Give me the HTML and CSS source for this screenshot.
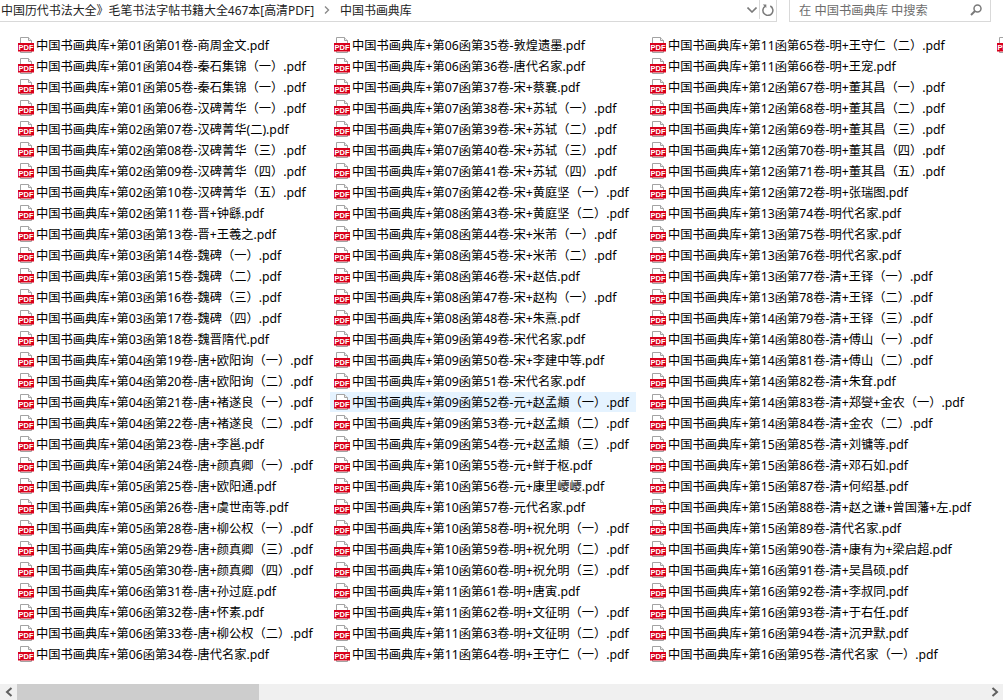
FILE: index.html
```html
<!DOCTYPE html>
<html lang="zh-CN">
<head>
    <meta charset="UTF-8">
    <title>中国书画典库</title>
    <link rel="stylesheet" href="styles.css">
</head>
<body>
    <svg class="defs">
        <symbol id="pdf" viewBox="0 0 16 16">
            <path d="M2.5 .5H10.5L13.5 3.5V15.5H2.5Z" fill="#fff" stroke="#a3a3a3"/>
            <path d="M10.5 .5V3.5H13.5" fill="#eee" stroke="#a3a3a3"/>
            <rect x="0" y="6" width="16" height="8.5" fill="#d9001b"/>
            <text x="8" y="12.8" text-anchor="middle" font-family="Liberation Sans, sans-serif" font-size="7.5" font-weight="bold" fill="#fff">PDF</text>
        </symbol>
    </svg>

    <div class="toolbar">
        <div class="address">
            <span class="crumb">中国历代书法大全》毛笔书法字帖书籍大全467本[高清PDF]</span>
            <svg class="crumb-sep" width="6" height="8" viewBox="0 0 6 8"><path d="M1 .5L4.5 4L1 7.500" fill="none" stroke="#8a8a8a" stroke-width="1.400"/></svg>
            <span class="crumb">中国书画典库</span>
            <div class="address-btns">
                <svg class="chevron" width="10" height="6" viewBox="0 0 10 6"><path d="M.5 .5L5 5L9.500 .5" fill="none" stroke="#7a7a7a" stroke-width="1.600"/></svg>
                <svg class="refresh" width="12" height="13" viewBox="0 0 12 13"><path d="M8.300 3A5 5 0 1 1 3 3.300" fill="none" stroke="#7a7a7a" stroke-width="1.500"/><path d="M2.300 .5H5.800V4Z" fill="#7a7a7a" transform="translate(-1.500 1)"/></svg>
            </div>
        </div>
        <div class="search">
            <span class="search-text">在 中国书画典库 中搜索</span>
            <svg width="12" height="12" viewBox="0 0 12 12"><circle cx="7.500" cy="4.500" r="3.500" fill="none" stroke="#7a7a7a" stroke-width="1.500"/><path d="M5 7L1 11" stroke="#7a7a7a" stroke-width="2"/></svg>
        </div>
    </div>

    <ul class="files">
        <li><svg class="pdf"><use href="#pdf"/></svg>中国书画典库+第01函第01卷-商周金文.pdf</li>
        <li><svg class="pdf"><use href="#pdf"/></svg>中国书画典库+第01函第04卷-秦石集锦（一）.pdf</li>
        <li><svg class="pdf"><use href="#pdf"/></svg>中国书画典库+第01函第05卷-秦石集锦（一）.pdf</li>
        <li><svg class="pdf"><use href="#pdf"/></svg>中国书画典库+第01函第06卷-汉碑菁华（一）.pdf</li>
        <li><svg class="pdf"><use href="#pdf"/></svg>中国书画典库+第02函第07卷-汉碑菁华(二).pdf</li>
        <li><svg class="pdf"><use href="#pdf"/></svg>中国书画典库+第02函第08卷-汉碑菁华（三）.pdf</li>
        <li><svg class="pdf"><use href="#pdf"/></svg>中国书画典库+第02函第09卷-汉碑菁华（四）.pdf</li>
        <li><svg class="pdf"><use href="#pdf"/></svg>中国书画典库+第02函第10卷-汉碑菁华（五）.pdf</li>
        <li><svg class="pdf"><use href="#pdf"/></svg>中国书画典库+第02函第11卷-晋+钟繇.pdf</li>
        <li><svg class="pdf"><use href="#pdf"/></svg>中国书画典库+第03函第13卷-晋+王羲之.pdf</li>
        <li><svg class="pdf"><use href="#pdf"/></svg>中国书画典库+第03函第14卷-魏碑（一）.pdf</li>
        <li><svg class="pdf"><use href="#pdf"/></svg>中国书画典库+第03函第15卷-魏碑（二）.pdf</li>
        <li><svg class="pdf"><use href="#pdf"/></svg>中国书画典库+第03函第16卷-魏碑（三）.pdf</li>
        <li><svg class="pdf"><use href="#pdf"/></svg>中国书画典库+第03函第17卷-魏碑（四）.pdf</li>
        <li><svg class="pdf"><use href="#pdf"/></svg>中国书画典库+第03函第18卷-魏晋隋代.pdf</li>
        <li><svg class="pdf"><use href="#pdf"/></svg>中国书画典库+第04函第19卷-唐+欧阳询（一）.pdf</li>
        <li><svg class="pdf"><use href="#pdf"/></svg>中国书画典库+第04函第20卷-唐+欧阳询（二）.pdf</li>
        <li><svg class="pdf"><use href="#pdf"/></svg>中国书画典库+第04函第21卷-唐+褚遂良（一）.pdf</li>
        <li><svg class="pdf"><use href="#pdf"/></svg>中国书画典库+第04函第22卷-唐+褚遂良（二）.pdf</li>
        <li><svg class="pdf"><use href="#pdf"/></svg>中国书画典库+第04函第23卷-唐+李邕.pdf</li>
        <li><svg class="pdf"><use href="#pdf"/></svg>中国书画典库+第04函第24卷-唐+颜真卿（一）.pdf</li>
        <li><svg class="pdf"><use href="#pdf"/></svg>中国书画典库+第05函第25卷-唐+欧阳通.pdf</li>
        <li><svg class="pdf"><use href="#pdf"/></svg>中国书画典库+第05函第26卷-唐+虞世南等.pdf</li>
        <li><svg class="pdf"><use href="#pdf"/></svg>中国书画典库+第05函第28卷-唐+柳公权（一）.pdf</li>
        <li><svg class="pdf"><use href="#pdf"/></svg>中国书画典库+第05函第29卷-唐+颜真卿（三）.pdf</li>
        <li><svg class="pdf"><use href="#pdf"/></svg>中国书画典库+第05函第30卷-唐+颜真卿（四）.pdf</li>
        <li><svg class="pdf"><use href="#pdf"/></svg>中国书画典库+第06函第31卷-唐+孙过庭.pdf</li>
        <li><svg class="pdf"><use href="#pdf"/></svg>中国书画典库+第06函第32卷-唐+怀素.pdf</li>
        <li><svg class="pdf"><use href="#pdf"/></svg>中国书画典库+第06函第33卷-唐+柳公权（二）.pdf</li>
        <li><svg class="pdf"><use href="#pdf"/></svg>中国书画典库+第06函第34卷-唐代名家.pdf</li>

        <li><svg class="pdf"><use href="#pdf"/></svg>中国书画典库+第06函第35卷-敦煌遗墨.pdf</li>
        <li><svg class="pdf"><use href="#pdf"/></svg>中国书画典库+第06函第36卷-唐代名家.pdf</li>
        <li><svg class="pdf"><use href="#pdf"/></svg>中国书画典库+第07函第37卷-宋+蔡襄.pdf</li>
        <li><svg class="pdf"><use href="#pdf"/></svg>中国书画典库+第07函第38卷-宋+苏轼（一）.pdf</li>
        <li><svg class="pdf"><use href="#pdf"/></svg>中国书画典库+第07函第39卷-宋+苏轼（二）.pdf</li>
        <li><svg class="pdf"><use href="#pdf"/></svg>中国书画典库+第07函第40卷-宋+苏轼（三）.pdf</li>
        <li><svg class="pdf"><use href="#pdf"/></svg>中国书画典库+第07函第41卷-宋+苏轼（四）.pdf</li>
        <li><svg class="pdf"><use href="#pdf"/></svg>中国书画典库+第07函第42卷-宋+黄庭坚（一）.pdf</li>
        <li><svg class="pdf"><use href="#pdf"/></svg>中国书画典库+第08函第43卷-宋+黄庭坚（二）.pdf</li>
        <li><svg class="pdf"><use href="#pdf"/></svg>中国书画典库+第08函第44卷-宋+米芾（一）.pdf</li>
        <li><svg class="pdf"><use href="#pdf"/></svg>中国书画典库+第08函第45卷-宋+米芾（二）.pdf</li>
        <li><svg class="pdf"><use href="#pdf"/></svg>中国书画典库+第08函第46卷-宋+赵佶.pdf</li>
        <li><svg class="pdf"><use href="#pdf"/></svg>中国书画典库+第08函第47卷-宋+赵构（一）.pdf</li>
        <li><svg class="pdf"><use href="#pdf"/></svg>中国书画典库+第08函第48卷-宋+朱熹.pdf</li>
        <li><svg class="pdf"><use href="#pdf"/></svg>中国书画典库+第09函第49卷-宋代名家.pdf</li>
        <li><svg class="pdf"><use href="#pdf"/></svg>中国书画典库+第09函第50卷-宋+李建中等.pdf</li>
        <li><svg class="pdf"><use href="#pdf"/></svg>中国书画典库+第09函第51卷-宋代名家.pdf</li>
        <li class="hover"><svg class="pdf"><use href="#pdf"/></svg>中国书画典库+第09函第52卷-元+赵孟頫（一）.pdf</li>
        <li><svg class="pdf"><use href="#pdf"/></svg>中国书画典库+第09函第53卷-元+赵孟頫（二）.pdf</li>
        <li><svg class="pdf"><use href="#pdf"/></svg>中国书画典库+第09函第54卷-元+赵孟頫（三）.pdf</li>
        <li><svg class="pdf"><use href="#pdf"/></svg>中国书画典库+第10函第55卷-元+鲜于枢.pdf</li>
        <li><svg class="pdf"><use href="#pdf"/></svg>中国书画典库+第10函第56卷-元+康里巎巎.pdf</li>
        <li><svg class="pdf"><use href="#pdf"/></svg>中国书画典库+第10函第57卷-元代名家.pdf</li>
        <li><svg class="pdf"><use href="#pdf"/></svg>中国书画典库+第10函第58卷-明+祝允明（一）.pdf</li>
        <li><svg class="pdf"><use href="#pdf"/></svg>中国书画典库+第10函第59卷-明+祝允明（二）.pdf</li>
        <li><svg class="pdf"><use href="#pdf"/></svg>中国书画典库+第10函第60卷-明+祝允明（三）.pdf</li>
        <li><svg class="pdf"><use href="#pdf"/></svg>中国书画典库+第11函第61卷-明+唐寅.pdf</li>
        <li><svg class="pdf"><use href="#pdf"/></svg>中国书画典库+第11函第62卷-明+文征明（一）.pdf</li>
        <li><svg class="pdf"><use href="#pdf"/></svg>中国书画典库+第11函第63卷-明+文征明（二）.pdf</li>
        <li><svg class="pdf"><use href="#pdf"/></svg>中国书画典库+第11函第64卷-明+王守仁（一）.pdf</li>

        <li><svg class="pdf"><use href="#pdf"/></svg>中国书画典库+第11函第65卷-明+王守仁（二）.pdf</li>
        <li><svg class="pdf"><use href="#pdf"/></svg>中国书画典库+第11函第66卷-明+王宠.pdf</li>
        <li><svg class="pdf"><use href="#pdf"/></svg>中国书画典库+第12函第67卷-明+董其昌（一）.pdf</li>
        <li><svg class="pdf"><use href="#pdf"/></svg>中国书画典库+第12函第68卷-明+董其昌（二）.pdf</li>
        <li><svg class="pdf"><use href="#pdf"/></svg>中国书画典库+第12函第69卷-明+董其昌（三）.pdf</li>
        <li><svg class="pdf"><use href="#pdf"/></svg>中国书画典库+第12函第70卷-明+董其昌（四）.pdf</li>
        <li><svg class="pdf"><use href="#pdf"/></svg>中国书画典库+第12函第71卷-明+董其昌（五）.pdf</li>
        <li><svg class="pdf"><use href="#pdf"/></svg>中国书画典库+第12函第72卷-明+张瑞图.pdf</li>
        <li><svg class="pdf"><use href="#pdf"/></svg>中国书画典库+第13函第74卷-明代名家.pdf</li>
        <li><svg class="pdf"><use href="#pdf"/></svg>中国书画典库+第13函第75卷-明代名家.pdf</li>
        <li><svg class="pdf"><use href="#pdf"/></svg>中国书画典库+第13函第76卷-明代名家.pdf</li>
        <li><svg class="pdf"><use href="#pdf"/></svg>中国书画典库+第13函第77卷-清+王铎（一）.pdf</li>
        <li><svg class="pdf"><use href="#pdf"/></svg>中国书画典库+第13函第78卷-清+王铎（二）.pdf</li>
        <li><svg class="pdf"><use href="#pdf"/></svg>中国书画典库+第14函第79卷-清+王铎（三）.pdf</li>
        <li><svg class="pdf"><use href="#pdf"/></svg>中国书画典库+第14函第80卷-清+傅山（一）.pdf</li>
        <li><svg class="pdf"><use href="#pdf"/></svg>中国书画典库+第14函第81卷-清+傅山（二）.pdf</li>
        <li><svg class="pdf"><use href="#pdf"/></svg>中国书画典库+第14函第82卷-清+朱耷.pdf</li>
        <li><svg class="pdf"><use href="#pdf"/></svg>中国书画典库+第14函第83卷-清+郑燮+金农（一）.pdf</li>
        <li><svg class="pdf"><use href="#pdf"/></svg>中国书画典库+第14函第84卷-清+金农（二）.pdf</li>
        <li><svg class="pdf"><use href="#pdf"/></svg>中国书画典库+第15函第85卷-清+刘镛等.pdf</li>
        <li><svg class="pdf"><use href="#pdf"/></svg>中国书画典库+第15函第86卷-清+邓石如.pdf</li>
        <li><svg class="pdf"><use href="#pdf"/></svg>中国书画典库+第15函第87卷-清+何绍基.pdf</li>
        <li><svg class="pdf"><use href="#pdf"/></svg>中国书画典库+第15函第88卷-清+赵之谦+曾国藩+左.pdf</li>
        <li><svg class="pdf"><use href="#pdf"/></svg>中国书画典库+第15函第89卷-清代名家.pdf</li>
        <li><svg class="pdf"><use href="#pdf"/></svg>中国书画典库+第15函第90卷-清+康有为+梁启超.pdf</li>
        <li><svg class="pdf"><use href="#pdf"/></svg>中国书画典库+第16函第91卷-清+吴昌硕.pdf</li>
        <li><svg class="pdf"><use href="#pdf"/></svg>中国书画典库+第16函第92卷-清+李叔同.pdf</li>
        <li><svg class="pdf"><use href="#pdf"/></svg>中国书画典库+第16函第93卷-清+于右任.pdf</li>
        <li><svg class="pdf"><use href="#pdf"/></svg>中国书画典库+第16函第94卷-清+沉尹默.pdf</li>
        <li><svg class="pdf"><use href="#pdf"/></svg>中国书画典库+第16函第95卷-清代名家（一）.pdf</li>

        <li><svg class="pdf"><use href="#pdf"/></svg></li>
    </ul>

    <div class="scrollbar">
        <div class="arrow"><svg width="8" height="10" viewBox="0 0 8 10"><path d="M6.500 1L2 5L6.500 9" fill="none" stroke="#606060" stroke-width="2"/></svg></div>
        <div class="thumb"></div>
        <div class="arrow"><svg width="8" height="10" viewBox="0 0 8 10"><path d="M1.500 1L6 5L1.500 9" fill="none" stroke="#606060" stroke-width="2"/></svg></div>
    </div>
</body>
</html>
```

FILE: styles.css
```css
html, body {
    height: 100%;
}
body {
    margin: 0;
    display: flex;
    flex-direction: column;
    overflow: hidden;
    background-color: white;
    color: #000;
    font-family: "Noto Sans", "Noto Sans CJK SC", sans-serif;
    font-size: 12.25px;
}
.defs {
    display: none;
}
.toolbar {
    display: flex;
    flex: none;
    height: 22px;
}
.address {
    display: flex;
    align-items: center;
    width: 777px;
    box-sizing: border-box;
    border-right: 1px solid #d9d9d9;
    border-bottom: 1px solid #d9d9d9;
    padding-bottom: 2px;
    padding-left: 1px;
    white-space: nowrap;
}
.crumb {
    color: #222;
    font-size: 11.95px;
}
.crumb-sep {
    margin: 0 10px 0 10px;
}
.address-btns {
    display: flex;
    align-items: center;
    margin-left: auto;
    height: 100%;
}
.chevron {
    margin-right: 2px;
}
.refresh {
    box-sizing: content-box;
    padding: 3px 2px;
    border-left: 1px solid #d9d9d9;
    height: 13px;
}
.search {
    display: flex;
    align-items: center;
    justify-content: space-between;
    width: 202px;
    margin-left: 12px;
    box-sizing: border-box;
    border-left: 1px solid #d9d9d9;
    border-right: 1px solid #d9d9d9;
    border-bottom: 1px solid #d9d9d9;
    padding: 0 8px 2px 9px;
}
.search-text {
    color: #6d6d6d;
}
.files {
    flex: 1;
    display: grid;
    grid-auto-flow: column;
    grid-template-rows: repeat(30, 20px);
    grid-template-columns: 316px 316px 347px 300px;
    align-content: start;
    row-gap: 1px;
    margin: 0;
    padding: 13px 0 0 14px;
    list-style: none;
    overflow: hidden;
}
.files li {
    display: flex;
    align-items: center;
    width: 306px;
    padding-left: 4px;
    box-sizing: border-box;
    white-space: nowrap;
}
.hover {
    background-color: #e5f3ff;
}
.pdf {
    flex: none;
    width: 16px;
    height: 16px;
    margin-right: 2px;
}
.scrollbar {
    flex: none;
    display: flex;
    height: 16px;
    background-color: #f0f0f0;
}
.arrow {
    display: flex;
    align-items: center;
    justify-content: center;
    width: 17px;
}
.thumb {
    width: 242px;
    background-color: #cdcdcd;
    margin-right: auto;
}
```
